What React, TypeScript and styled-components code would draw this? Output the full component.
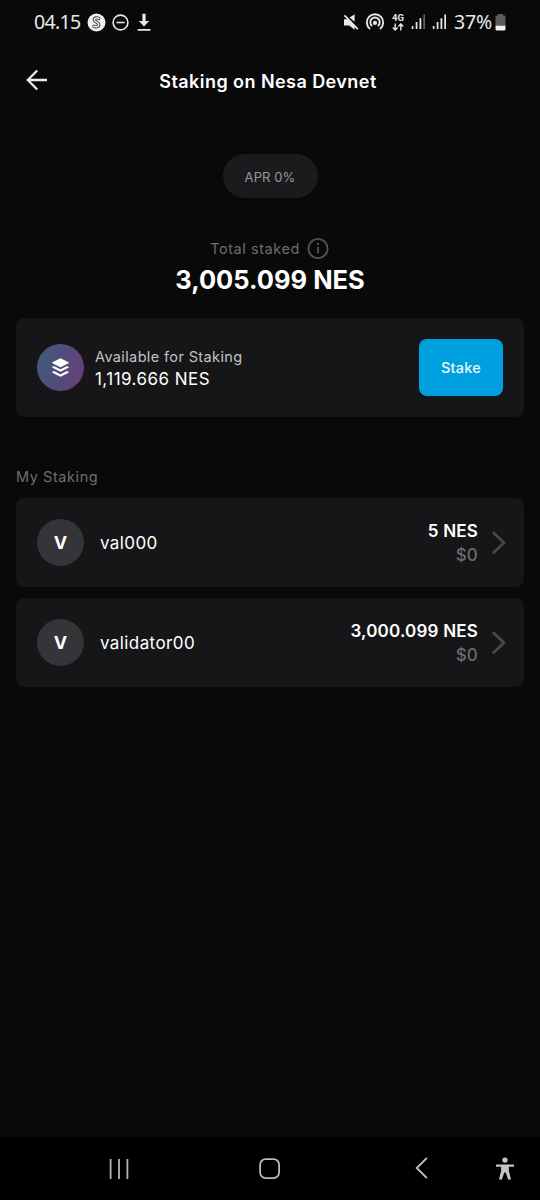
import React from "react";
import styled, { createGlobalStyle } from "styled-components";

const GlobalStyle = createGlobalStyle`
  * { box-sizing: border-box; }
  body { margin: 0; background: #090909; }
`;

const Screen = styled.div`
  width: 540px;
  height: 1200px;
  display: flex;
  flex-direction: column;
  background: #090909;
  color: #fff;
  font-family: Inter, "Liberation Sans", sans-serif;
  overflow: hidden;
`;

const StatusBar = styled.div`
  height: 44px;
  display: flex;
  justify-content: space-between;
  align-items: center;
  padding: 0 34px;
  color: #e8e8e8;
`;

const StatusGroup = styled.div<{ $gap?: number; $after?: number }>`
  display: flex;
  align-items: center;
  height: 44px;
  gap: ${(p) => p.$gap ?? 0}px;
  margin-right: ${(p) => p.$after ?? 0}px;
  svg { display: block; flex: none; }
`;

const StatusText = styled.span<{ $width: number; $spacing: number }>`
  width: ${(p) => p.$width}px;
  font: 400 19.5px/44px "Noto Sans", sans-serif;
  letter-spacing: ${(p) => p.$spacing}px;
  white-space: nowrap;
`;

const Network = styled.div`
  width: 19px;
  display: flex;
  flex-direction: column;
  align-items: flex-start;
  gap: 1px;
  font: 700 9.5px/8px Roboto, sans-serif;
`;

const Header = styled.header`
  height: 74px;
  display: grid;
  grid-template-columns: 74px 1fr 78px;
  align-items: center;
`;

const BackButton = styled.button`
  width: 74px;
  height: 74px;
  padding: 0 0 2px;
  border: 0;
  background: none;
  display: grid;
  place-items: center;
`;

const Title = styled.h1`
  margin: 0;
  padding-top: 2px;
  text-align: center;
  font-size: 18px;
  line-height: 24px;
  font-weight: 600;
  letter-spacing: 0.44px;
`;

const Main = styled.main`
  flex: 1;
  padding: 36px 16px 0;
  display: flex;
  flex-direction: column;
`;

const AprPill = styled.div`
  align-self: center;
  width: 95px;
  height: 44px;
  border-radius: 22px;
  background: #1b1b1e;
  color: #97979b;
  font-size: 13px;
  line-height: 46px;
  text-align: center;
  letter-spacing: 0.1px;
`;

const TotalLabel = styled.div`
  margin-top: 38px;
  height: 24px;
  padding-right: 1px;
  display: flex;
  justify-content: center;
  align-items: center;
  gap: 7px;
  color: #6d6d72;
  font-size: 14.5px;
  letter-spacing: 0.55px;
`;

const TotalAmount = styled.div`
  margin-top: 1px;
  height: 38px;
  text-align: center;
  font-size: 25.5px;
  line-height: 38px;
  font-weight: 700;
`;

const Card = styled.section<{ $height: number }>`
  height: ${(p) => p.$height}px;
  padding: 0 21px;
  display: flex;
  align-items: center;
  border-radius: 8px;
  background: #161618;
`;

const AvailableCard = styled(Card)`
  margin-top: 19px;
`;

const Avatar = styled.div<{ $gradient?: boolean }>`
  width: 47px;
  height: 47px;
  flex: none;
  display: grid;
  place-items: center;
  border-radius: 50%;
  background: ${(p) => (p.$gradient ? "linear-gradient(105deg, #3f5a7c 5%, #514d7c 48%, #683d78 95%)" : "#353438")};
  font-size: 18px;
  font-weight: 700;
`;

const AvailableInfo = styled.div`
  flex: 1;
  padding-left: 11px;
`;

const AvailableLabel = styled.div`
  color: #c2c2c5;
  font-size: 14.5px;
  line-height: 22px;
  letter-spacing: 0.37px;
`;

const AvailableAmount = styled.div`
  font-size: 17px;
  line-height: 22px;
  letter-spacing: 0.46px;
`;

const StakeButton = styled.button`
  width: 84px;
  height: 57px;
  padding: 0;
  border: 0;
  border-radius: 8px;
  background: #009fdf;
  color: #e8f7fe;
  font: 500 14.5px/57px Inter, sans-serif;
  letter-spacing: 0.25px;
`;

const SectionTitle = styled.h2`
  margin: 49px 0 10px;
  height: 22px;
  color: #6d6d72;
  font-size: 14.5px;
  line-height: 22px;
  font-weight: 400;
  letter-spacing: 0.57px;
`;

const ValidatorList = styled.div`
  display: flex;
  flex-direction: column;
  gap: 11px;
`;

const ValidatorCard = styled(Card)`
  padding-right: 18px;
`;

const ValidatorName = styled.div`
  flex: 1;
  padding-left: 16px;
  font-size: 17px;
  line-height: 24px;
  letter-spacing: 0.4px;
`;

const Balance = styled.div`
  margin-right: 14px;
  text-align: right;
  font-size: 17px;
  line-height: 24px;
  font-weight: 600;
  letter-spacing: 0.2px;
`;

const FiatValue = styled.div`
  color: #6a6a6f;
  font-weight: 500;
`;

const NavBar = styled.nav`
  height: 63px;
  background: #000;
  display: grid;
  grid-template-columns: 238px 63px 239px;
  align-items: center;
  svg { display: block; }
`;

const NavSlot = styled.div<{ $start?: number }>`
  display: flex;
  justify-content: space-between;
  padding-left: ${(p) => p.$start ?? 0}px;
  padding-right: 26px;
`;

const HomeSlot = styled.div`
  display: grid;
  place-items: center;
`;

const BadgeIcon = () => (
  <svg width="19" height="19" viewBox="0 0 19 19" fill="none">
    <circle cx="9.5" cy="9.5" r="9" fill="#f1f1f1" />
    <path d="M11.9 5.6C10.6 4.3 7.2 4.7 7.2 6.7c0 2.2 4.7 2.6 4.7 5 0 2.2-3.6 2.7-5 1.4" stroke="#333" strokeWidth="3.2" strokeLinecap="round" />
    <path d="M11.9 5.6C10.6 4.3 7.2 4.7 7.2 6.7c0 2.2 4.7 2.6 4.7 5 0 2.2-3.6 2.7-5 1.4" stroke="#eee" strokeWidth="1.5" strokeLinecap="round" />
  </svg>
);

const MinusCircle = () => (
  <svg width="17" height="17" viewBox="0 0 17 17" fill="none" stroke="currentColor" strokeWidth="1.6">
    <circle cx="8.5" cy="8.5" r="7.4" /><path d="M4.4 8.5h8.2" />
  </svg>
);

const DownloadIcon = () => (
  <svg width="16" height="18" viewBox="-2 -.8 16 18" fill="currentColor">
    <path d="M5.4 0h3.2v7.2h3.5L7 12.6 1.9 7.2h3.5zM.7 15.1h12.7v1.8H.7z" />
  </svg>
);

const MuteIcon = () => (
  <svg width="16" height="18" viewBox="0 0 16 18" fill="currentColor">
    <path d="M1 6.2h3.7l6.9 6.3v4.3L6.2 12.4H1zM6.6 4.4l5-3.2v7.6z" />
    <path d="m1.5 2.4 13.3 13.7" stroke="currentColor" strokeWidth="1.8" />
  </svg>
);

const HotspotIcon = () => (
  <svg width="20" height="18" viewBox="0 0 20 18" fill="none" stroke="currentColor" strokeWidth="1.9">
    <path d="M5 15.9a8.2 8.2 0 1 1 10 0M7.1 12.9a4.7 4.7 0 1 1 5.8 0" />
    <circle cx="10" cy="9.9" r="2.1" fill="currentColor" stroke="none" />
  </svg>
);

const DataArrows = () => (
  <svg width="12" height="8" viewBox="0 0 12 8" fill="none" stroke="currentColor" strokeWidth="1.4">
    <path d="M3.2 .5v6.4M.8 4.5 3.2 7l2.4-2.5M8.8 7.5V1M6.4 3.4 8.8.9l2.4 2.5" />
  </svg>
);

const SignalIcon = ({ weak = false }: { weak?: boolean }) => (
  <svg width="15" height="16" viewBox="0 0 15 16" fill="currentColor">
    <path d="M.8 12h1.6v3H.8zM4.7 8h1.7v7H4.7zM8.5 4.2h1.8V15H8.5z" />
    <path d="M12.3.5H14V15h-1.7z" opacity={weak ? 0.4 : 1} />
  </svg>
);

const BatteryIcon = () => (
  <svg width="11" height="17" viewBox="0 0 11 17">
    <path d="M3 0h5v1.5h1.2c.8 0 1.3.5 1.3 1.3V12H.5V2.8c0-.8.5-1.3 1.3-1.3H3z" fill="#5c5c5c" />
    <path d="M.5 11.7h10v3.4c0 .8-.5 1.3-1.3 1.3H1.8c-.8 0-1.3-.5-1.3-1.3z" fill="#f4f4f4" />
  </svg>
);

const BackArrow = () => (
  <svg width="22" height="22" viewBox="0 0 22 22" fill="none" stroke="#ececee" strokeWidth="2.3">
    <path d="M11.2 1.5 1.8 11l9.4 9.5M2 11h19" />
  </svg>
);

const InfoIcon = () => (
  <svg width="22" height="22" viewBox="0 0 22 22" fill="none" stroke="#515155" strokeWidth="1.9">
    <circle cx="11" cy="11.5" r="9.6" />
    <path d="M11 10.1v6.2M11 6.1v2" />
  </svg>
);

const LayersIcon = () => (
  <svg width="19" height="20" viewBox="0 0 20 20" preserveAspectRatio="none" fill="#fff">
    <path d="M9.4.4Q10 .1 10.6.4l7.8 3.9q1 .5 0 1L10.6 9.1q-.6.3-1.2 0L1.6 5.3q-1-.5 0-1z" />
    <path d="m1.6 8.8 1.1-.5q.5-.2 1 0l5.5 2.7q.8.4 1.6 0l5.5-2.7q.5-.2 1 0l1.1.5q1 .5 0 1l-7.8 3.8q-.6.3-1.2 0L1.6 9.8q-1-.5 0-1zM1.6 13.8l1.1-.5q.5-.2 1 0L9.2 16q.8.4 1.6 0l5.5-2.7q.5-.2 1 0l1.1.5q1 .5 0 1l-7.8 3.8q-.6.3-1.2 0l-7.8-3.8q-1-.5 0-1z" />
  </svg>
);

const ChevronIcon = () => (
  <svg width="14" height="24" viewBox="0 0 14 24" fill="none" stroke="#48484b" strokeWidth="2.8" strokeLinecap="round" strokeLinejoin="round">
    <path d="m1.7 1.9 10.3 9.8L1.7 21.5" />
  </svg>
);

const RecentsIcon = () => (
  <svg width="21" height="22" viewBox="0 0 21 22" stroke="#b5b5b5" strokeWidth="1.8">
    <path d="M1.6 1v20M10 1v20M18.4 1v20" />
  </svg>
);

const HomeIcon = () => (
  <svg width="22" height="22" viewBox="0 0 22 22" fill="none" stroke="#bababa" strokeWidth="1.8">
    <rect x="1.1" y="1.1" width="19" height="19" rx="5.6" />
  </svg>
);

const NavBackIcon = () => (
  <svg width="13" height="22" viewBox="0 0 13 22" fill="none" stroke="#b9b9b9" strokeWidth="1.9">
    <path d="M11.8 1 1.7 11l10.1 10" />
  </svg>
);

const AccessibilityIcon = () => (
  <svg width="18" height="23" viewBox="0 0 18 23" fill="#c4c4c4">
    <circle cx="9" cy="3.1" r="2.7" />
    <path d="M0 7.4h18v2.3h-5.1v4.2l2.1 8.3-2.8.5-2.5-7.2H8.3l-2.5 7.2-2.8-.5 2.1-8.3V9.7H0z" />
  </svg>
);

const validators = [
  { name: "val000", amount: "5 NES", fiat: "$0" },
  { name: "validator00", amount: "3,000.099 NES", fiat: "$0" },
];

export default function App() {
  return (
    <Screen>
      <GlobalStyle />
      <StatusBar>
        <StatusGroup>
          <StatusText $width={53} $spacing={-0.7}>04.15</StatusText>
          <StatusGroup $gap={6}>
            <BadgeIcon />
            <MinusCircle />
            <DownloadIcon />
          </StatusGroup>
        </StatusGroup>
        <StatusGroup>
          <StatusGroup $gap={6} $after={7}>
            <MuteIcon />
            <HotspotIcon />
          </StatusGroup>
          <Network>
            4G
            <DataArrows />
          </Network>
          <StatusGroup $gap={6} $after={7}>
            <SignalIcon weak />
            <SignalIcon />
          </StatusGroup>
          <StatusText $width={41} $spacing={-0.2}>37%</StatusText>
          <BatteryIcon />
        </StatusGroup>
      </StatusBar>

      <Header>
        <BackButton aria-label="Back"><BackArrow /></BackButton>
        <Title>Staking on Nesa Devnet</Title>
      </Header>

      <Main>
        <AprPill>APR 0%</AprPill>
        <TotalLabel>Total staked <InfoIcon /></TotalLabel>
        <TotalAmount>3,005.099 NES</TotalAmount>

        <AvailableCard $height={99}>
          <Avatar $gradient><LayersIcon /></Avatar>
          <AvailableInfo>
            <AvailableLabel>Available for Staking</AvailableLabel>
            <AvailableAmount>1,119.666 NES</AvailableAmount>
          </AvailableInfo>
          <StakeButton>Stake</StakeButton>
        </AvailableCard>

        <SectionTitle>My Staking</SectionTitle>
        <ValidatorList>
          {validators.map((v) => (
            <ValidatorCard key={v.name} $height={89}>
              <Avatar>V</Avatar>
              <ValidatorName>{v.name}</ValidatorName>
              <Balance>
                {v.amount}
                <FiatValue>{v.fiat}</FiatValue>
              </Balance>
              <ChevronIcon />
            </ValidatorCard>
          ))}
        </ValidatorList>
      </Main>

      <NavBar>
        <NavSlot $start={109}><RecentsIcon /></NavSlot>
        <HomeSlot><HomeIcon /></HomeSlot>
        <NavSlot $start={114}><NavBackIcon /><AccessibilityIcon /></NavSlot>
      </NavBar>
    </Screen>
  );
}
